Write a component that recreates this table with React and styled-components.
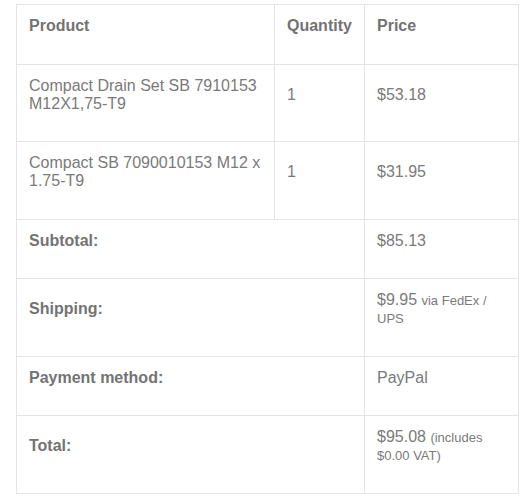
import React from "react";
import styled, { createGlobalStyle } from "styled-components";

const Global = createGlobalStyle`
  html, body { margin: 0; padding: 0; background: #ffffff; }
  body { font-family: "Liberation Sans", Arial, sans-serif; }
`;

const Page = styled.div`
  padding: 4px 4px 0 16px;
`;

const Table = styled.table`
  width: 502px;
  border-collapse: collapse;
  table-layout: fixed;
  border: 1px solid #e4e4e4;
  font-size: 16px;
  line-height: 18px;
  color: #7a7a7a;
`;

const Col = styled.col`
  width: ${(p) => p.$w}px;
`;

const Cell = styled.td`
  border: 1px solid #e4e4e4;
  padding: 12px 12px 28.5px 12px;
  vertical-align: middle;
  text-align: left;
  font-weight: ${(p) => (p.$bold ? 700 : 400)};
  color: ${(p) => (p.$bold ? "#737373" : "#7a7a7a")};
`;

const Small = styled.small`
  font-size: 13px;
  line-height: 13px;
`;

const items = [
  { name: "Compact Drain Set SB 7910153 M12X1,75-T9", qty: 1, price: "$53.18" },
  { name: "Compact SB 7090010153 M12 x 1.75-T9", qty: 1, price: "$31.95" },
];

const totals = [
  { label: "Subtotal:", value: <>$85.13</> },
  { label: "Shipping:", value: <>$9.95 <Small>via FedEx / UPS</Small></> },
  { label: "Payment method:", value: <>PayPal</> },
  { label: "Total:", value: <>$95.08 <Small>(includes $0.00 VAT)</Small></> },
];

export default function App() {
  return (
    <Page>
      <Global />
      <Table>
        <colgroup>
          <Col $w={258} />
          <Col $w={90} />
          <Col $w={154} />
        </colgroup>
        <thead>
          <tr>
            <Cell as="th" $bold>Product</Cell>
            <Cell as="th" $bold>Quantity</Cell>
            <Cell as="th" $bold>Price</Cell>
          </tr>
        </thead>
        <tbody>
          {items.map((it) => (
            <tr key={it.name}>
              <Cell>{it.name}</Cell>
              <Cell>{it.qty}</Cell>
              <Cell>{it.price}</Cell>
            </tr>
          ))}
        </tbody>
        <tfoot>
          {totals.map((t) => (
            <tr key={t.label}>
              <Cell as="th" colSpan={2} $bold>{t.label}</Cell>
              <Cell>{t.value}</Cell>
            </tr>
          ))}
        </tfoot>
      </Table>
    </Page>
  );
}
